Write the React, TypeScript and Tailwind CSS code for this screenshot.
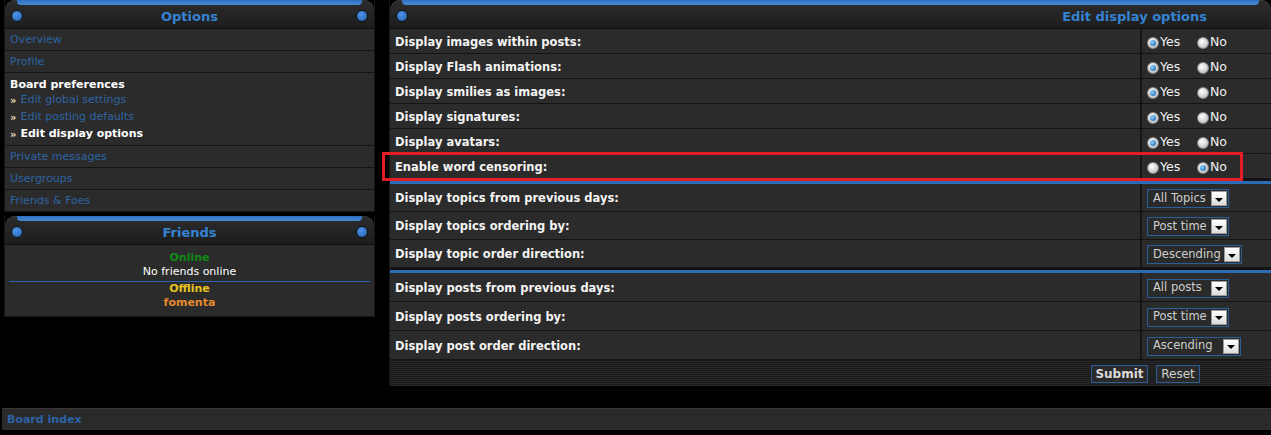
import React from 'react'

const PanelHead = ({ title, right = true, align = 'center' }: { title?: string; right?: boolean; align?: 'center' | 'end' }) => (
  <div className="relative flex h-[29px] items-center rounded-t-[10px] border-b border-[#0f0f0f] bg-[linear-gradient(to_bottom,#2c2c2c,#1d1d1d)] shadow-[inset_0_1px_0_#3a3a3a]">
    <span className="absolute left-[12px] right-[12px] top-0 h-[5px] rounded-b-[4px] bg-[linear-gradient(to_bottom,#2f6fc0,#4a8ad8)]" />
    <span className="absolute left-[6px] top-[10px] h-[12px] w-[12px] rounded-full border border-[#111] bg-[radial-gradient(circle_at_40%_35%,#4c94e6,#1f5fae)]" />
    {right && (
      <span className="absolute right-[6px] top-[10px] h-[12px] w-[12px] rounded-full border border-[#111] bg-[radial-gradient(circle_at_40%_35%,#4c94e6,#1f5fae)]" />
    )}
    <div className={`flex w-full pt-[5px] text-[13px] font-bold text-[#3583d4] ${align === 'end' ? 'justify-end pr-[64px]' : 'justify-center'}`}>
      {title}
    </div>
  </div>
)

const NavRow = ({ label }: { label: string }) => (
  <div className="flex h-[22px] items-center border-b border-[#141414] bg-[#2b2b2b] pl-[5px] pt-[2px] text-[11px] text-[#2d64a4]">
    {label}
  </div>
)

const SubItem = ({ label, active = false }: { label: string; active?: boolean }) => (
  <div className="flex h-[17px] items-center gap-[4px] text-[11px]">
    <span className="text-[10px] font-bold text-[#e6dcb8]">»</span>
    <span className={active ? 'font-bold text-white' : 'text-[#2d64a4]'}>{label}</span>
  </div>
)

const Radio = ({ on }: { on: boolean }) => (
  <span className="inline-flex h-[12px] w-[12px] items-center justify-center rounded-full border border-[#8a8a8a] bg-[radial-gradient(circle_at_40%_35%,#ffffff,#d0d0d0_60%,#9c9c9c)]">
    {on && <span className="h-[6px] w-[6px] rounded-full bg-[radial-gradient(circle_at_35%_35%,#8fd0ff,#0b5aa6)]" />}
  </span>
)

const YesNo = ({ yes }: { yes: boolean }) => (
  <div className="flex items-center pl-[5px] pt-[3px] text-[12.5px] text-[#f2f2f2]">
    <Radio on={yes} />
    <span className="ml-[1px] w-[37px]">Yes</span>
    <Radio on={!yes} />
    <span className="ml-[1px]">No</span>
  </div>
)

const Select = ({ label, width }: { label: string; width: string }) => (
  <div className={`ml-[5px] mt-[2px] flex h-[19px] items-center justify-between border border-[#2a5d9a] bg-[#2a2a2a] pl-[5px] pr-[1px] text-[11.5px] text-[#cfcfcf] ${width}`}>
    <span>{label}</span>
    <span className="flex h-[15px] w-[16px] items-center justify-center border border-[#9a9a9a] bg-[linear-gradient(to_bottom,#ffffff,#dcdcdc)]">
      <span className="mt-[2px] h-0 w-0 border-x-[4px] border-t-[4px] border-x-transparent border-t-black" />
    </span>
  </div>
)

const OptRow = ({ label, h, children }: { label: string; h: string; children: React.ReactNode }) => (
  <div className={`flex border-b border-[#141414] bg-[#2b2b2b] ${h}`}>
    <div className="flex w-[752px] items-center border-r-2 border-[#161616] pl-[5px] pt-[3px] text-[11.5px] font-bold text-[#f4f4f4]">
      {label}
    </div>
    <div className="flex flex-1 items-center">{children}</div>
  </div>
)

const Sep = () => <div className="h-[5px] border-t-2 border-[#121212] bg-[#2d6cb4]" />

const radios: [string, boolean][] = [
  ['Display images within posts:', true],
  ['Display Flash animations:', true],
  ['Display smilies as images:', true],
  ['Display signatures:', true],
  ['Display avatars:', true],
  ['Enable word censoring:', false],
]

export default function App() {
  return (
    <div className="relative h-[435px] w-[1271px] overflow-hidden bg-black font-['DejaVu_Sans',Verdana,sans-serif]">
      <div className="flex items-start gap-[14px] pl-[4px]">
        {/* left column */}
        <div className="flex w-[371px] flex-col gap-[4px]">
          <div className="flex flex-col border-x border-[#161616]">
            <PanelHead title="Options" />
            <NavRow label="Overview" />
            <NavRow label="Profile" />
            <div className="flex h-[73px] flex-col border-b border-[#141414] bg-[#2b2b2b] pl-[5px] pt-[5px]">
              <div className="flex h-[14px] items-center text-[11px] font-bold text-white">Board preferences</div>
              <SubItem label="Edit global settings" />
              <SubItem label="Edit posting defaults" />
              <SubItem label="Edit display options" active />
            </div>
            <NavRow label="Private messages" />
            <NavRow label="Usergroups" />
            <NavRow label="Friends & Foes" />
          </div>

          <div className="flex flex-col border-x border-b border-[#161616]">
            <PanelHead title="Friends" />
            <div className="flex flex-col items-center bg-[#2b2b2b] pb-[6px] pt-[6px] text-[11px]">
              <div className="flex h-[14px] items-center font-bold text-[#0f8a14]">Online</div>
              <div className="flex h-[14px] items-center text-white">No friends online</div>
              <div className="mt-[2px] h-px w-[361px] bg-[#2a64b0]" />
              <div className="flex h-[14px] items-center font-bold text-[#e6c21e]">Offline</div>
              <div className="flex h-[14px] items-center font-bold text-[#e38a2e]">fomenta</div>
            </div>
          </div>
        </div>

        {/* main panel */}
        <div className="flex w-[882px] flex-col border-l border-[#161616]">
          <PanelHead title="Edit display options" right={false} align="end" />
          {radios.map(([label, yes]) => (
            <OptRow key={label} label={label} h="h-[25px]">
              <YesNo yes={yes} />
            </OptRow>
          ))}
          <Sep />
          <OptRow label="Display topics from previous days:" h="h-[28px]">
            <Select label="All Topics" width="w-[82px]" />
          </OptRow>
          <OptRow label="Display topics ordering by:" h="h-[28px]">
            <Select label="Post time" width="w-[82px]" />
          </OptRow>
          <OptRow label="Display topic order direction:" h="h-[28px]">
            <Select label="Descending" width="w-[95px]" />
          </OptRow>
          <Sep />
          <OptRow label="Display posts from previous days:" h="h-[29px]">
            <Select label="All posts" width="w-[82px]" />
          </OptRow>
          <OptRow label="Display posts ordering by:" h="h-[29px]">
            <Select label="Post time" width="w-[82px]" />
          </OptRow>
          <OptRow label="Display post order direction:" h="h-[29px]">
            <Select label="Ascending" width="w-[94px]" />
          </OptRow>
          <div className="flex h-[26px] items-center justify-end gap-[8px] bg-[repeating-linear-gradient(to_bottom,#1b1b1b_0px,#1b1b1b_1px,#262626_1px,#262626_2px)] pr-[71px] pt-[1px]">
            <button className="flex h-[18px] w-[57px] items-center justify-center border border-[#2a5d9a] bg-[#2a2a2a] text-[12px] font-bold text-[#dadada]">
              Submit
            </button>
            <button className="flex h-[18px] w-[44px] items-center justify-center border border-[#2a5d9a] bg-[#2a2a2a] text-[12px] text-[#d0d0d0]">
              Reset
            </button>
          </div>
        </div>
      </div>

      <div className="ml-[2px] mt-[22px] flex h-[22px] items-center border-t border-[#3a3a3a] bg-[#2a2a2a] pl-[5px] pt-[2px] text-[11px] font-bold text-[#2c63a6]">
        Board index
      </div>

      {/* highlight annotation */}
      <div className="pointer-events-none absolute left-[382px] top-[152px] h-[29px] w-[861px] border-[3px] border-[#e41c24]" />
    </div>
  )
}
